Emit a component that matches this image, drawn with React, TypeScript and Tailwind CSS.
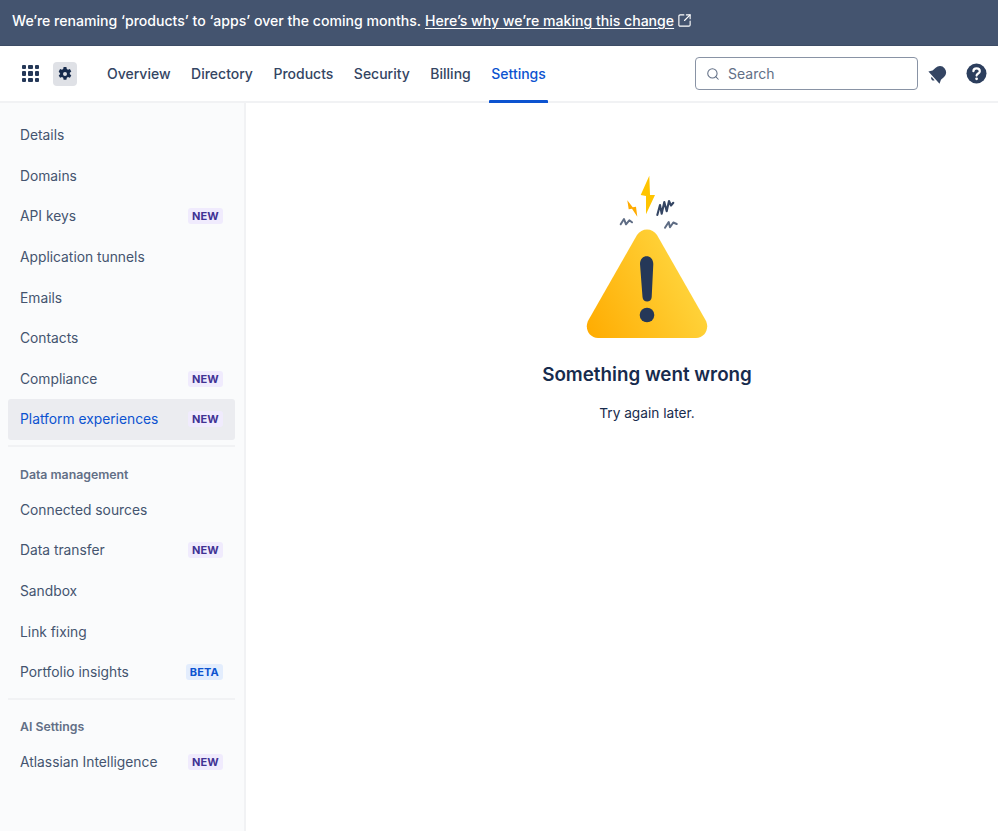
import { Search, SquareArrowOutUpRight } from 'lucide-react';

const font = { fontFamily: 'Inter, "Noto Sans", sans-serif' };

function NavRow({ label, badge, active }: { label: string; badge?: string; active?: boolean }) {
  return (
    <div className={`flex h-[40.6px] items-center justify-between rounded-[3px] pl-3 pr-3 ${active ? 'bg-[#ebecf0] text-[#0c53d0]' : 'text-[#44546f]'}`}>
      <span className="text-[13.8px] leading-5">{label}</span>
      {badge === 'NEW' && (
        <span className="rounded-[3px] bg-[#f0ebfd] px-1 text-[11px] leading-4 font-bold tracking-[0.2px] text-[#403294]">NEW</span>
      )}
      {badge === 'BETA' && (
        <span className="rounded-[3px] bg-[#e3edfd] px-1 text-[11px] leading-4 font-bold tracking-[0.2px] text-[#0c53d0]">BETA</span>
      )}
    </div>
  );
}

function SectionHead({ label }: { label: string }) {
  return <div className="mt-[12.8px] flex h-[29.4px] items-center px-3 text-[12.3px] font-semibold text-[#626f86]">{label}</div>;
}

function WarningArt() {
  return (
    <svg width="124" height="164" viewBox="0 0 124 164" fill="none">
      <defs>
        <linearGradient id="warn" x1="0" y1="1" x2="1" y2="0.55">
          <stop offset="0" stopColor="#ffab00" />
          <stop offset="1" stopColor="#ffd740" />
        </linearGradient>
      </defs>
      <path d="M64.3 .7 L55.7 20 L61 21 L61 39.3 L70 20 L65 20 Z" fill="#ffc400" />
      <path d="M42.3 25.3 L43.7 34.3 L47 33.7 L52.3 41.7 L51 31.7 L47.7 32.3 Z" fill="#ffab00" />
      <path d="M35.7 49.3 L39 44 L41 49.3 L44.3 45.3 L47 47.3" stroke="#5e6c84" strokeWidth="2" strokeLinecap="round" strokeLinejoin="round" />
      <path d="M72.3 40 L75 30 L76.7 38.8 L79.3 27 L81.7 36.2 L84 26 L86 30.5 L88.3 27.8" stroke="#344563" strokeWidth="2.1" strokeLinecap="round" strokeLinejoin="round" />
      <path d="M80 52.7 L83.7 47 L85 52.3 L88.3 47.5 L91.7 49" stroke="#5e6c84" strokeWidth="2" strokeLinecap="round" strokeLinejoin="round" />
      <path d="M52 60 C56.5 52.5 67.5 52.5 72 60 L120.5 145 C125 153 120 163 111 163 L13 163 C4 163 -1 153 3.5 145 Z" fill="url(#warn)" />
      <path d="M55 89 C55 78.5 68.3 78.5 68.3 89 L66.7 122 C66.5 128 57.8 128 57.5 122 Z" fill="#253858" />
      <circle cx="62" cy="140" r="7.3" fill="#253858" />
    </svg>
  );
}

export default function App() {
  return (
    <div style={font} className="flex h-[831px] w-[998px] flex-col overflow-hidden bg-white">
      <div className="flex h-[46px] shrink-0 items-center gap-1 border-b border-[#3d4c65] bg-[#44546f] pb-[4px] pl-3 text-[14.08px] font-medium text-white">
        <span>We’re renaming ‘products’ to ‘apps’ over the coming months.</span>
        <span className="underline underline-offset-2">Here’s why we’re making this change</span>
        <SquareArrowOutUpRight className="-ml-[1px] h-[15px] w-[15px]" strokeWidth={1.8} />
      </div>

      <header className="flex h-[57px] shrink-0 items-center border-b-2 border-[#f1f2f4]">
        <div className="ml-[22px] grid w-[17px] grid-cols-3 gap-[2px]">
          {Array.from({ length: 9 }).map((_, i) => (
            <span key={i} className="h-[4.3px] w-[4.3px] rounded-[1px] bg-[#253858]" />
          ))}
        </div>
        <div className="ml-[14px] flex h-6 w-6 items-center justify-center rounded-[4px] bg-[#dfe1e6]">
          <svg width="16" height="16" viewBox="0 0 16 16">
            <path
              fillRule="evenodd"
              d="M6.6 1h2.8l.4 2 1.2.7 1.9-.7 1.4 2.4-1.5 1.3v1.4l1.5 1.3-1.4 2.4-1.9-.7-1.2.7-.4 2H6.6l-.4-2-1.2-.7-1.9.7-1.4-2.4 1.5-1.3V7.7L1.7 5.4 3.1 3l1.9.7L6.2 3ZM8 6a2 2 0 1 0 0 4 2 2 0 0 0 0-4Z"
              fill="#172b4d"
            />
          </svg>
        </div>
        <nav className="ml-[30px] flex h-full items-center gap-[20.5px] text-[14px] font-medium text-[#344563]">
          <span>Overview</span>
          <span>Directory</span>
          <span>Products</span>
          <span>Security</span>
          <span>Billing</span>
          <span className="relative flex h-full items-center text-[#0c53d0]">
            Settings
            <span className="absolute -right-0.5 -bottom-0.5 -left-0.5 h-[3px] rounded-t-[1px] bg-[#0c53d0]" />
          </span>
        </nav>
        <div className="mr-[10px] ml-auto flex h-[33px] w-[223px] items-center gap-2 rounded-[4px] border border-[#8993a5] pl-2.5 text-[14px] text-[#626f86]">
          <Search className="h-[14px] w-[14px]" strokeWidth={1.8} />
          <span>Search</span>
        </div>
        <svg width="20" height="20" viewBox="0 0 24 24">
          <g transform="rotate(48 12 12)" fill="#344563">
            <path d="M12 1.5a7.5 7.5 0 0 0-7.5 7.5v5L2 18.5h20L19.5 14V9A7.5 7.5 0 0 0 12 1.5Z" />
            <path d="M9.2 20a2.9 2.9 0 0 0 5.6 0Z" />
          </g>
        </svg>
        <svg className="mr-[11px] ml-[18px]" width="21" height="21" viewBox="0 0 21 21">
          <circle cx="10.5" cy="10.5" r="10" fill="#2c3e5d" />
          <path d="M7.4 8.2 C7.4 4.4 13.8 4.4 13.8 8.2 C13.8 10.6 10.6 10.4 10.6 12.6" fill="none" stroke="#fff" strokeWidth="2.2" strokeLinecap="round" />
          <circle cx="10.6" cy="15.8" r="1.4" fill="#fff" />
        </svg>
      </header>

      <div className="flex min-h-0 flex-1">
        <aside className="w-[246px] shrink-0 border-r-2 border-[#f1f2f4] bg-[#fafbfc] pt-[12px] pr-[9px] pl-2">
          <NavRow label="Details" />
          <NavRow label="Domains" />
          <NavRow label="API keys" badge="NEW" />
          <NavRow label="Application tunnels" />
          <NavRow label="Emails" />
          <NavRow label="Contacts" />
          <NavRow label="Compliance" badge="NEW" />
          <NavRow label="Platform experiences" badge="NEW" active />
          <div className="mt-[5.5px] h-0.5 bg-[#f1f2f4]" />
          <SectionHead label="Data management" />
          <NavRow label="Connected sources" />
          <NavRow label="Data transfer" badge="NEW" />
          <NavRow label="Sandbox" />
          <NavRow label="Link fixing" />
          <NavRow label="Portfolio insights" badge="BETA" />
          <div className="mt-[5.5px] h-0.5 bg-[#f1f2f4]" />
          <SectionHead label="AI Settings" />
          <NavRow label="Atlassian Intelligence" badge="NEW" />
        </aside>

        <main className="flex flex-1 flex-col items-center pt-[72px] pl-[50px]">
          <WarningArt />
          <h1 className="mt-[24px] text-[18.8px] leading-6 font-semibold text-[#172b4d]">Something went wrong</h1>
          <p className="mt-[16px] text-[13.7px] leading-5 text-[#172b4d]">Try again later.</p>
        </main>
      </div>
    </div>
  );
}
